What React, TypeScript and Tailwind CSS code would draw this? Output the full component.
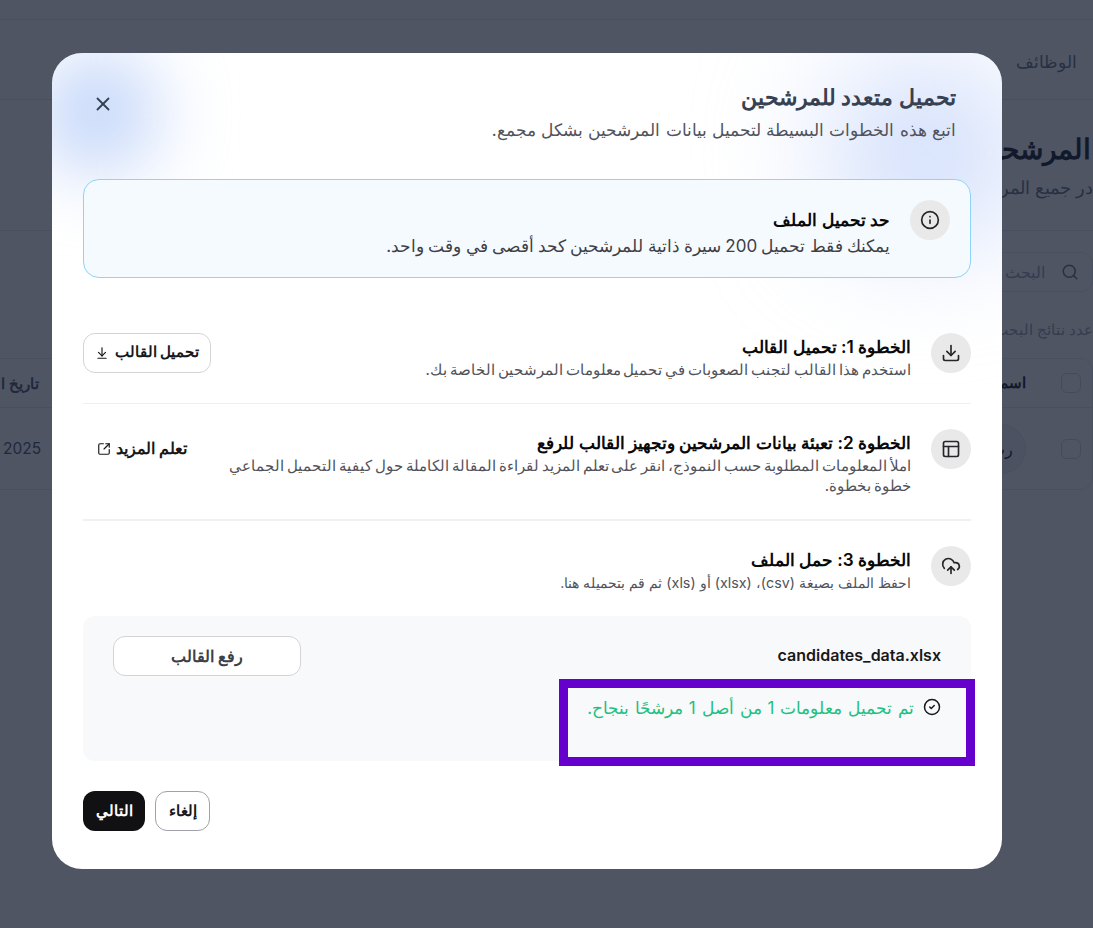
import { ArrowDownToLine, CircleCheck, CloudUpload, Download, Info, PanelsTopLeft, Search, SquareArrowOutUpRight, X } from 'lucide-react';
import type { ReactNode } from 'react';

function IconCircle({ children }: { children: ReactNode }) {
  return (
    <div className="w-10 h-10 shrink-0 rounded-full bg-[#e9e9ea] text-[#27272a] flex items-center justify-center">
      {children}
    </div>
  );
}

function BackgroundPage() {
  return (
    <div className="h-full flex flex-col text-[#111827]">
      <div className="h-5 border-b border-gray-200" />
      <div className="h-20 border-b border-gray-200 flex items-center pr-4 pt-[6px]">
        <span className="text-[17px] font-medium text-gray-500">الوظائف</span>
      </div>
      <div className="h-[131px] border-b border-gray-200 pt-[31px]">
        <h2 className="text-[28px] font-bold leading-9 pr-[2px]">المرشحين</h2>
        <p className="mt-[11px] text-[17.5px] leading-5 text-gray-500">در جميع المرشحين</p>
      </div>
      <div className="pt-[21px] pb-[28px]">
        <div className="h-10 border border-gray-200 rounded-xl flex items-center gap-4 pr-[13px] ml-60 text-base text-gray-400">
          <Search className="w-[18px] h-[18px] text-gray-500" />
          <span>البحث باسم المرشح</span>
        </div>
      </div>
      <p className="text-[15px] leading-5 text-gray-400 mb-[18px]">عدد نتائج البحث</p>
      <div className="border border-gray-200 rounded-xl -ml-4 pl-4">
        <div className="h-[49px] -ml-4 pl-4 border-b border-gray-200 flex items-center justify-between pr-[11px]">
          <div className="flex items-center gap-[35px]">
            <span className="w-5 h-5 border border-gray-300 rounded-md" />
            <span className="text-[15px] font-semibold">اسم المرشح</span>
          </div>
          <span className="text-[15px] font-semibold text-gray-600 pt-[2px]">تاريخ ا</span>
        </div>
        <div className="h-[81px] flex items-center justify-between pr-[11px]">
          <div className="flex items-center gap-[35px]">
            <span className="w-5 h-5 border border-gray-300 rounded-md" />
            <span className="w-[50px] h-[50px] rounded-full bg-gray-100 border border-gray-200 flex items-center justify-center text-base">رت</span>
          </div>
          <span className="text-[15.5px] text-gray-600 ml-[2px]">2025</span>
        </div>
      </div>
    </div>
  );
}

export default function App() {
  return (
    <div dir="rtl" className="relative h-[928px] overflow-hidden bg-white font-['Inter',sans-serif]">
      <BackgroundPage />
      <div className="absolute inset-0 bg-[#111a2d]/[0.74] flex items-start justify-start pt-[53px] pr-[91px]">
        <div className="relative w-[950px] h-[816px] bg-white rounded-[30px] overflow-hidden px-[31px] pt-[30px]">
          {/* soft blue glows in the corners */}
          <div className="absolute left-[-10px] top-[5px] w-[110px] h-[110px] rounded-full bg-[#b6cdf8] blur-2xl" />
          <div className="absolute right-[-20px] top-[15px] w-[190px] h-[170px] rounded-full bg-[#c9d8fa] blur-3xl" />

          <div className="relative flex justify-between items-start pr-[15px]">
            <div>
              <h2 className="text-[22px] leading-7 font-semibold text-[#374151]">تحميل متعدد للمرشحين</h2>
              <p className="mt-[7px] text-[17px] leading-6 text-[#52525b] [word-spacing:0.5px]">اتبع هذه الخطوات البسيطة لتحميل بيانات المرشحين بشكل مجمع.</p>
            </div>
            <X className="w-[22px] h-[22px] text-[#374151] mt-[10px] ml-[9px]" strokeWidth={2} />
          </div>

          <div className="relative mt-[37px] h-[99px] rounded-2xl border border-[#8fd3f8] bg-[#f5faff] flex items-start gap-5 pr-5 pt-5">
            <IconCircle><Info className="w-5 h-5" /></IconCircle>
            <div className="pt-[9px]">
              <h3 className="text-[17px] leading-[22px] font-semibold text-[#09090b]">حد تحميل الملف</h3>
              <p className="mt-[3px] text-[17px] leading-6 text-[#3f3f46] [word-spacing:-0.5px]">يمكنك فقط تحميل 200 سيرة ذاتية للمرشحين كحد أقصى في وقت واحد.</p>
            </div>
          </div>

          <div className="relative mt-[55px] pb-[30px] h-[71px] border-b border-[#f0f0f2] flex items-start justify-between">
            <div className="flex gap-5">
              <IconCircle><Download className="w-5 h-5" /></IconCircle>
              <div>
                <h3 className="pt-px text-[17.2px] leading-[26px] font-semibold text-[#09090b]">الخطوة 1: تحميل القالب</h3>
                <p className="text-[15px] leading-5 text-[#52525b] [word-spacing:-1.3px]">استخدم هذا القالب لتجنب الصعوبات في تحميل معلومات المرشحين الخاصة بك.</p>
              </div>
            </div>
            <button className="w-[128px] h-10 rounded-xl border border-[#d4d4d8] bg-white flex items-center justify-center gap-[6px] text-[14.6px] font-semibold text-[#18181b]">
              تحميل القالب
              <ArrowDownToLine className="w-3.5 h-3.5" />
            </button>
          </div>

          <div className="relative pt-[25px] h-[117px] border-b-2 border-[#f0f0f2] flex items-start justify-between">
            <div className="flex gap-5">
              <IconCircle><PanelsTopLeft className="w-5 h-5" /></IconCircle>
              <div className="w-[690px]">
                <h3 className="pt-px text-[17.2px] leading-[26px] font-semibold text-[#09090b]">الخطوة 2: تعبئة بيانات المرشحين وتجهيز القالب للرفع</h3>
                <p className="text-[15px] leading-5 text-[#52525b] [word-spacing:-1.3px]">املأ المعلومات المطلوبة حسب النموذج، انقر على تعلم المزيد لقراءة المقالة الكاملة حول كيفية التحميل الجماعي خطوة بخطوة.</p>
              </div>
            </div>
            <a className="flex items-center gap-[5px] ml-[14px] h-10 text-[15.5px] font-semibold text-[#18181b]">
              تعلم المزيد
              <SquareArrowOutUpRight className="w-3.5 h-3.5" />
            </a>
          </div>

          <div className="relative pt-[25px] flex gap-5">
            <IconCircle><CloudUpload className="w-5 h-5" /></IconCircle>
            <div>
              <h3 className="pt-px text-[17.2px] leading-[26px] font-semibold text-[#09090b]">الخطوة 3: حمل الملف</h3>
              <p className="text-[14.3px] leading-5 text-[#52525b]">احفظ الملف بصيغة (csv)، (xlsx) أو (xls) ثم قم بتحميله هنا.</p>
            </div>
          </div>

          <div className="relative mt-[23px] h-[145px] rounded-xl bg-[#f8f9fb] pt-5 px-[30px]">
            <div className="flex items-start justify-between">
              <span dir="ltr" className="text-base leading-[38px] font-semibold text-[#18181b]">candidates_data.xlsx</span>
              <button className="w-[188px] h-10 rounded-xl border border-[#d4d4d8] bg-white text-base font-semibold text-[#3f3f46]">رفع القالب</button>
            </div>
            <div className="mt-5 flex items-center gap-[9px] text-[17px] leading-6 text-[#22c080] [word-spacing:1.1px]">
              <CircleCheck className="w-[18px] h-[18px] text-[#18181b] -mt-[3px]" />
              <span>تم تحميل معلومات 1 من أصل 1 مرشحًا بنجاح.</span>
            </div>
          </div>

          <div className="relative mt-[30px] flex justify-end gap-[10px]">
            <button className="w-[55px] h-10 rounded-xl border border-[#a1a1aa] bg-white text-[15px] font-semibold text-[#18181b]">إلغاء</button>
            <button className="w-[62px] h-10 rounded-xl bg-[#111114] text-[15px] font-semibold text-white">التالي</button>
          </div>

          {/* annotation box around the success message */}
          <div className="absolute left-[507px] top-[626px] w-[416px] h-[87px] border-[9px] border-[#6600cc]" />
        </div>
      </div>
    </div>
  );
}
